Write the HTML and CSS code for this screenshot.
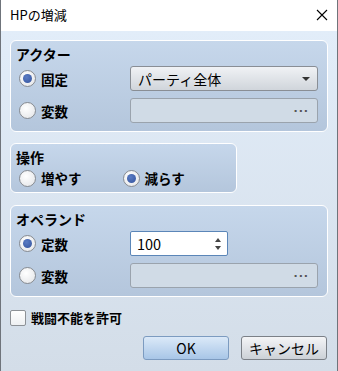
FILE: index.html
```html
<!DOCTYPE html>
<html>
  <head>
    <meta charset="utf-8">
    <title>HPの増減</title>
    <link rel="stylesheet" href="styles.css">
  </head>
  <body>
    <div class="window">
      <!-- Title bar -->
      <div class="titlebar">
        <span class="title">HPの増減</span>
        <svg class="close" width="12" height="12" viewBox="0 0 12 12">
          <path d="M1 1 L11 11 M11 1 L1 11" stroke="#000" stroke-width="1.1" fill="none"/>
        </svg>
      </div>

      <div class="content">
        <!-- Actor -->
        <div class="group group-actor">
          <div class="group-title">アクター</div>
          <div class="row">
            <label class="option"><span class="radio checked"></span>固定</label>
            <div class="combo">
              <span>パーティ全体</span>
              <span class="arrow"></span>
            </div>
          </div>
          <div class="row">
            <label class="option"><span class="radio"></span>変数</label>
            <div class="picker"><span class="dots">...</span></div>
          </div>
        </div>

        <!-- Operation -->
        <div class="group group-op">
          <div class="group-title">操作</div>
          <div class="row row-small">
            <label class="option option-op"><span class="radio"></span>増やす</label>
            <label class="option"><span class="radio checked"></span>減らす</label>
          </div>
        </div>

        <!-- Operand -->
        <div class="group group-operand">
          <div class="group-title">オペランド</div>
          <div class="row">
            <label class="option"><span class="radio checked"></span>定数</label>
            <div class="spin">
              <span>100</span>
              <span class="spin-arrows">
                <span class="up"></span>
                <span class="down"></span>
              </span>
            </div>
          </div>
          <div class="row">
            <label class="option"><span class="radio"></span>変数</label>
            <div class="picker"><span class="dots">...</span></div>
          </div>
        </div>

        <label class="check-row"><span class="checkbox"></span>戦闘不能を許可</label>

        <div class="buttons">
          <button class="btn btn-ok">OK</button>
          <button class="btn">キャンセル</button>
        </div>
      </div>
    </div>
  </body>
</html>
```

FILE: styles.css
```css
/* Basic reset */
body {
  margin: 0;
  padding: 0;
  font-family: "Noto Sans CJK JP", "Noto Sans", sans-serif;
  color: #000;
  background: #6f747b;
}
.window {
  width: 336px;
  height: 371px;
  border-left: 1px solid #6f747b;
  border-right: 1px solid #6f747b;
  display: flex;
  flex-direction: column;
}
.titlebar {
  height: 31px;
  background: #fff;
  display: flex;
  align-items: center;
  justify-content: space-between;
  padding: 0 9px 0 9px;
  flex-shrink: 0;
}
.title {
  font-size: 13px;
  line-height: 16px;
  margin-top: -1px;
}
.close {
  margin-top: -2px;
}
/* Dialog body */
.content {
  flex: 1;
  background: linear-gradient(#e2edf9, #d3dde8);
  padding: 9px 9px 0 9px;
  display: flex;
  flex-direction: column;
}
.group {
  border: 1px solid #fff;
  border-radius: 6px;
  background: linear-gradient(#c6d7eb, #b4c6dc);
  padding: 3px 9px 8px 8px;
}
.group-title {
  font-size: 14px;
  font-weight: 700;
  line-height: 20px;
  height: 20px;
  margin-left: -3px;
  margin-bottom: 2px;
}
.row {
  display: flex;
  align-items: center;
  height: 25px;
}
.row + .row {
  margin-top: 7px;
}
.row-small {
  height: 18px;
}
.group-op {
  width: 208px;
  margin-top: 11px;
  padding-bottom: 5px;
}
.group-operand {
  margin-top: 12px;
}
/* Radio options */
.option {
  display: flex;
  align-items: center;
  width: 111px;
  font-size: 13.5px;
  font-weight: 700;
  line-height: 16px;
}
.option-op {
  width: 110px;
}
.radio {
  width: 15px;
  height: 15px;
  border: 1px solid #878b91;
  border-radius: 50%;
  background: radial-gradient(circle at 40% 35%, #fff, #e1e3e6);
  margin-right: 5px;
  position: relative;
  flex-shrink: 0;
}
.radio.checked::after {
  content: "";
  position: absolute;
  left: 3px;
  top: 3px;
  width: 9px;
  height: 9px;
  border-radius: 50%;
  background: radial-gradient(circle at 40% 35%, #5a7cc4, #34539c);
}
/* Combo box */
.combo {
  width: 172px;
  height: 23px;
  border: 1px solid #898e95;
  border-radius: 3px;
  background: linear-gradient(#f0f2f5, #d0d5db);
  display: flex;
  align-items: center;
  justify-content: space-between;
  padding: 0 7px 0 7px;
  box-sizing: content-box;
  font-size: 14px;
  line-height: 18px;
}
.arrow {
  width: 0;
  height: 0;
  border-left: 4px solid transparent;
  border-right: 4px solid transparent;
  border-top: 4px solid #333;
  margin-top: 1px;
}
/* Disabled picker */
.picker {
  width: 178px;
  height: 23px;
  border: 1px solid #9aa3ad;
  border-radius: 3px;
  background: #d0dbe6;
  display: flex;
  align-items: center;
  justify-content: flex-end;
  padding-right: 8px;
  box-sizing: content-box;
}
.dots {
  font-family: "DejaVu Sans", sans-serif;
  font-size: 11px;
  font-weight: 700;
  letter-spacing: 1px;
  color: #555;
  line-height: 12px;
  margin-top: -3px;
}
/* Spin box */
.spin {
  width: 98px;
  height: 25px;
  border: 1px solid #5b86b8;
  border-radius: 2px;
  background: #fff;
  display: flex;
  align-items: center;
  justify-content: space-between;
  padding: 0 6px 0 6px;
  box-sizing: border-box;
  font-size: 14.5px;
  line-height: 18px;
}
.spin-arrows {
  display: flex;
  flex-direction: column;
  gap: 4px;
}
.spin-arrows .up {
  border-left: 3.5px solid transparent;
  border-right: 3.5px solid transparent;
  border-bottom: 4px solid #444;
}
.spin-arrows .down {
  border-left: 3.5px solid transparent;
  border-right: 3.5px solid transparent;
  border-top: 4px solid #444;
}
/* Checkbox */
.check-row {
  display: flex;
  align-items: center;
  margin-top: 13px;
  height: 16px;
  font-size: 13px;
  font-weight: 700;
  line-height: 16px;
}
.checkbox {
  width: 14px;
  height: 14px;
  border: 1px solid #8d9196;
  border-radius: 2px;
  background: linear-gradient(#fff, #eef0f2);
  margin-right: 5px;
}
/* Buttons */
.buttons {
  display: flex;
  justify-content: flex-end;
  gap: 12px;
  margin-top: 10px;
  margin-right: 1px;
}
.btn {
  width: 86px;
  height: 24px;
  border: 1px solid #7b8087;
  border-radius: 3px;
  background: linear-gradient(#f4f5f7, #ccd1d7);
  font-family: "Noto Sans CJK JP", "Noto Sans", sans-serif;
  font-size: 14px;
  line-height: 18px;
  padding: 0;
  color: #000;
}
.btn-ok {
  border-color: #7c9bc0;
  background: linear-gradient(#dbe9f8, #a8c6e7);
}
```
